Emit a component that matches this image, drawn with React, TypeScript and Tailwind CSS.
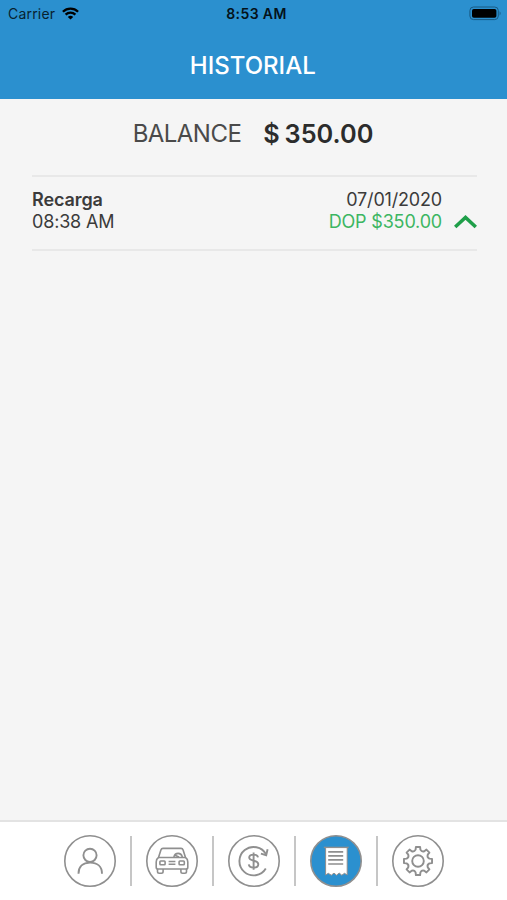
import { useState, type ReactNode } from 'react';

interface Movimiento {
  id: number;
  tipo: string;
  fecha: string;
  hora: string;
  monto: string;
}

const movimientos: Movimiento[] = [
  { id: 1, tipo: 'Recarga', fecha: '07/01/2020', hora: '08:38 AM', monto: 'DOP $350.00' },
];

function polar(deg: number, r: number) {
  const a = (deg * Math.PI) / 180;
  return `${(26 + r * Math.cos(a)).toFixed(2)} ${(26 + r * Math.sin(a)).toFixed(2)}`;
}

// eight teeth with rounded valleys, around the centre of a 52x52 icon
function gearPath() {
  let d = '';
  for (let i = 0; i < 8; i++) {
    const base = i * 45 - 90;
    d += `${i === 0 ? 'M' : ''}${polar(base - 12, 11.6)}`;
    d += `L${polar(base - 8.5, 14.2)}L${polar(base + 8.5, 14.2)}L${polar(base + 12, 11.6)}`;
    d += `Q${polar(base + 22.5, 9.6)} `;
  }
  return `${d}${polar(-102, 11.6)}Z`;
}

const tabs: { id: string; label: string; icon: ReactNode }[] = [
  {
    id: 'perfil',
    label: 'Perfil',
    icon: (
      <>
        <circle cx="26" cy="20.3" r="6.6" />
        <path d="M14.5 38.7C14.5 31.5 19 27.6 26.1 27.6S38 31.5 38 38.7" />
      </>
    ),
  },
  {
    id: 'vehiculo',
    label: 'Vehículo',
    icon: (
      <g strokeWidth="1.6">
        <path d="M12.5 22.5L14.9 15Q15.4 13.4 17 13.4H35Q36.6 13.4 37.1 15L39.5 22.5" />
        <path d="M12.5 22.5H39.5Q41.8 24 41.8 27V32.2Q41.8 34 40 34H12Q10.2 34 10.2 32.2V27Q10.2 24 12.5 22.5Z" />
        <path d="M28 22.3V21.7A4.2 4.2 0 0 1 36.2 21.7V22.3M29.5 20.4L33 22" />
        <rect x="13.9" y="26" width="5.2" height="3.7" rx=".8" />
        <rect x="33.1" y="26" width="5.2" height="3.7" rx=".8" />
        <path d="M22.6 26.5H29.4M22.6 29.2H29.4" />
        <path d="M11.5 34V36.5Q11.5 38.2 13.2 38.2H15.4Q17.1 38.2 17.1 36.5V34M34.9 34V36.5Q34.9 38.2 36.6 38.2H38.8Q40.5 38.2 40.5 36.5V34" />
      </g>
    ),
  },
  {
    id: 'recarga',
    label: 'Recarga',
    icon: (
      <>
        <path d="M37.8 33.5A14.2 14.2 0 1 1 38.1 19.4" />
        <path d="M32.9 18.6L38.2 20.2L39.6 14.2" strokeLinejoin="miter" />
        <path d="M30 22.3C29.7 20.5 28 19.6 25.5 19.6C22.7 19.6 21.2 20.8 21.2 22.6C21.2 27 30.3 24.4 30.3 29.2C30.3 31.2 28.5 32.5 25.7 32.5C22.8 32.5 21 31.3 20.8 29.3M25.6 17.6V34.7" />
      </>
    ),
  },
  {
    id: 'historial',
    label: 'Historial',
    icon: (
      <>
        <path
          d="M15.6 12.5V40L18.3 38.3L21.3 40.2L24 38.1L26.5 40.2L29.2 38.1L31.8 40.2L34.5 38.3L37.2 40V12.5Z"
          fill="#fff"
          strokeWidth="1"
        />
        <path d="M13.8 12.4H38.7" strokeWidth="1.4" />
        <path d="M18.2 16.8H33.2M18.2 20.8H33.2M18.2 24.9H33.2M18.2 29H33.2" strokeWidth="1.7" />
      </>
    ),
  },
  {
    id: 'ajustes',
    label: 'Ajustes',
    icon: (
      <>
        <path d={gearPath()} />
        <circle cx="26" cy="26" r="5.8" />
      </>
    ),
  },
];

function StatusBar() {
  return (
    <div className="grid h-7 grid-cols-3 items-center pl-2 pr-[5px] text-[14px] text-[#08222f]">
      <div className="flex items-center gap-[7px]">
        <span className="-mt-0.5 tracking-[0.2px]">Carrier</span>
        <svg className="-mt-0.5" width="17" height="13" viewBox="0 0 17 13" fill="none" stroke="#000" strokeWidth="2.3">
          <path d="M.9 4.7C5.2.5 11.8.5 16.1 4.7" />
          <path d="M3.6 7.6C6.4 4.9 10.6 4.9 13.4 7.6" />
          <path d="M8.5 12.6L5.8 9.9C7.3 8.5 9.7 8.5 11.2 9.9Z" fill="#000" stroke="none" />
        </svg>
      </div>
      <span className="-mt-0.5 pl-[3px] text-center text-[14px] font-semibold tracking-[0.4px] whitespace-nowrap text-[#04121a]">
        8:53 AM
      </span>
      <svg className="-mt-0.5 justify-self-end" width="33" height="15" viewBox="0 0 33 15">
        <rect x=".9" y="1" width="28.4" height="12.6" rx="3.6" fill="none" stroke="#195a83" strokeWidth="1" />
        <rect x="3" y="3" width="24.4" height="8.8" rx="1.8" fill="#000" />
        <path d="M30.6 5.2Q32.6 7.3 30.6 9.4Z" fill="#195a83" />
      </svg>
    </div>
  );
}

export default function App() {
  const [activeTab, setActiveTab] = useState('historial');

  return (
    <div className="flex h-[900px] w-full flex-col bg-[#f5f5f5] font-['Inter','Liberation_Sans',sans-serif] text-[#3b3b3b]">
      <header className="h-[98.5px] shrink-0 bg-[#2b90cf]">
        <StatusBar />
        <h1 className="pt-[22px] pr-[1.5px] text-center text-[24px] leading-8 font-medium text-white">HISTORIAL</h1>
      </header>

      <main className="flex-1 px-8 pt-5">
        <div className="flex h-[30px] items-center justify-center gap-[22px] pr-px text-[24px]">
          <span className="tracking-[-0.55px] text-[#4a4a4a]">BALANCE</span>
          <span className="pt-px text-[25.3px] font-semibold [word-spacing:-1.5px] text-[#2c2c2c]">$ 350.00</span>
        </div>

        <ul className="mt-[26.5px] -mr-0.5 border-t-2 border-[#e8e8e8]">
          {movimientos.map(mov => (
            <li key={mov.id} className="flex h-[74px] justify-between border-b-2 border-[#e8e8e8] pt-3 text-[18px] leading-[22px] tracking-[-0.18px]">
              <div>
                <p className="font-semibold tracking-[-0.1px]">{mov.tipo}</p>
                <p>{mov.hora}</p>
              </div>
              <div className="flex items-end gap-3 self-start">
                <div className="text-right">
                  <p>{mov.fecha}</p>
                  <p className="text-[#3cb662]">{mov.monto}</p>
                </div>
                <svg className="mb-1" width="23" height="15" viewBox="0 0 23 15" fill="none" stroke="#1f9f49" strokeWidth="3.5">
                  <path d="M1.2 13L11.5 3.4L21.8 13" />
                </svg>
              </div>
            </li>
          ))}
        </ul>
      </main>

      <nav className="flex h-20 shrink-0 items-center justify-center border-t-2 border-[#e3e3e3] bg-white">
        {tabs.map((tab, index) => (
          <div key={tab.id} className="flex items-center">
            {index > 0 && <span className="mx-3.5 h-[50px] w-0.5 bg-[#c6c6c6]" />}
            <button onClick={() => setActiveTab(tab.id)} aria-label={tab.label}>
              <svg
                width="52"
                height="52"
                viewBox="0 0 52 52"
                fill="none"
                stroke="#8f8f8f"
                strokeWidth="1.9"
                strokeLinejoin="round"
              >
                <circle cx="26" cy="26" r="25.2" strokeWidth="1.6" fill={activeTab === tab.id ? '#2b90cf' : 'none'} />
                {tab.icon}
              </svg>
            </button>
          </div>
        ))}
      </nav>
    </div>
  );
}
